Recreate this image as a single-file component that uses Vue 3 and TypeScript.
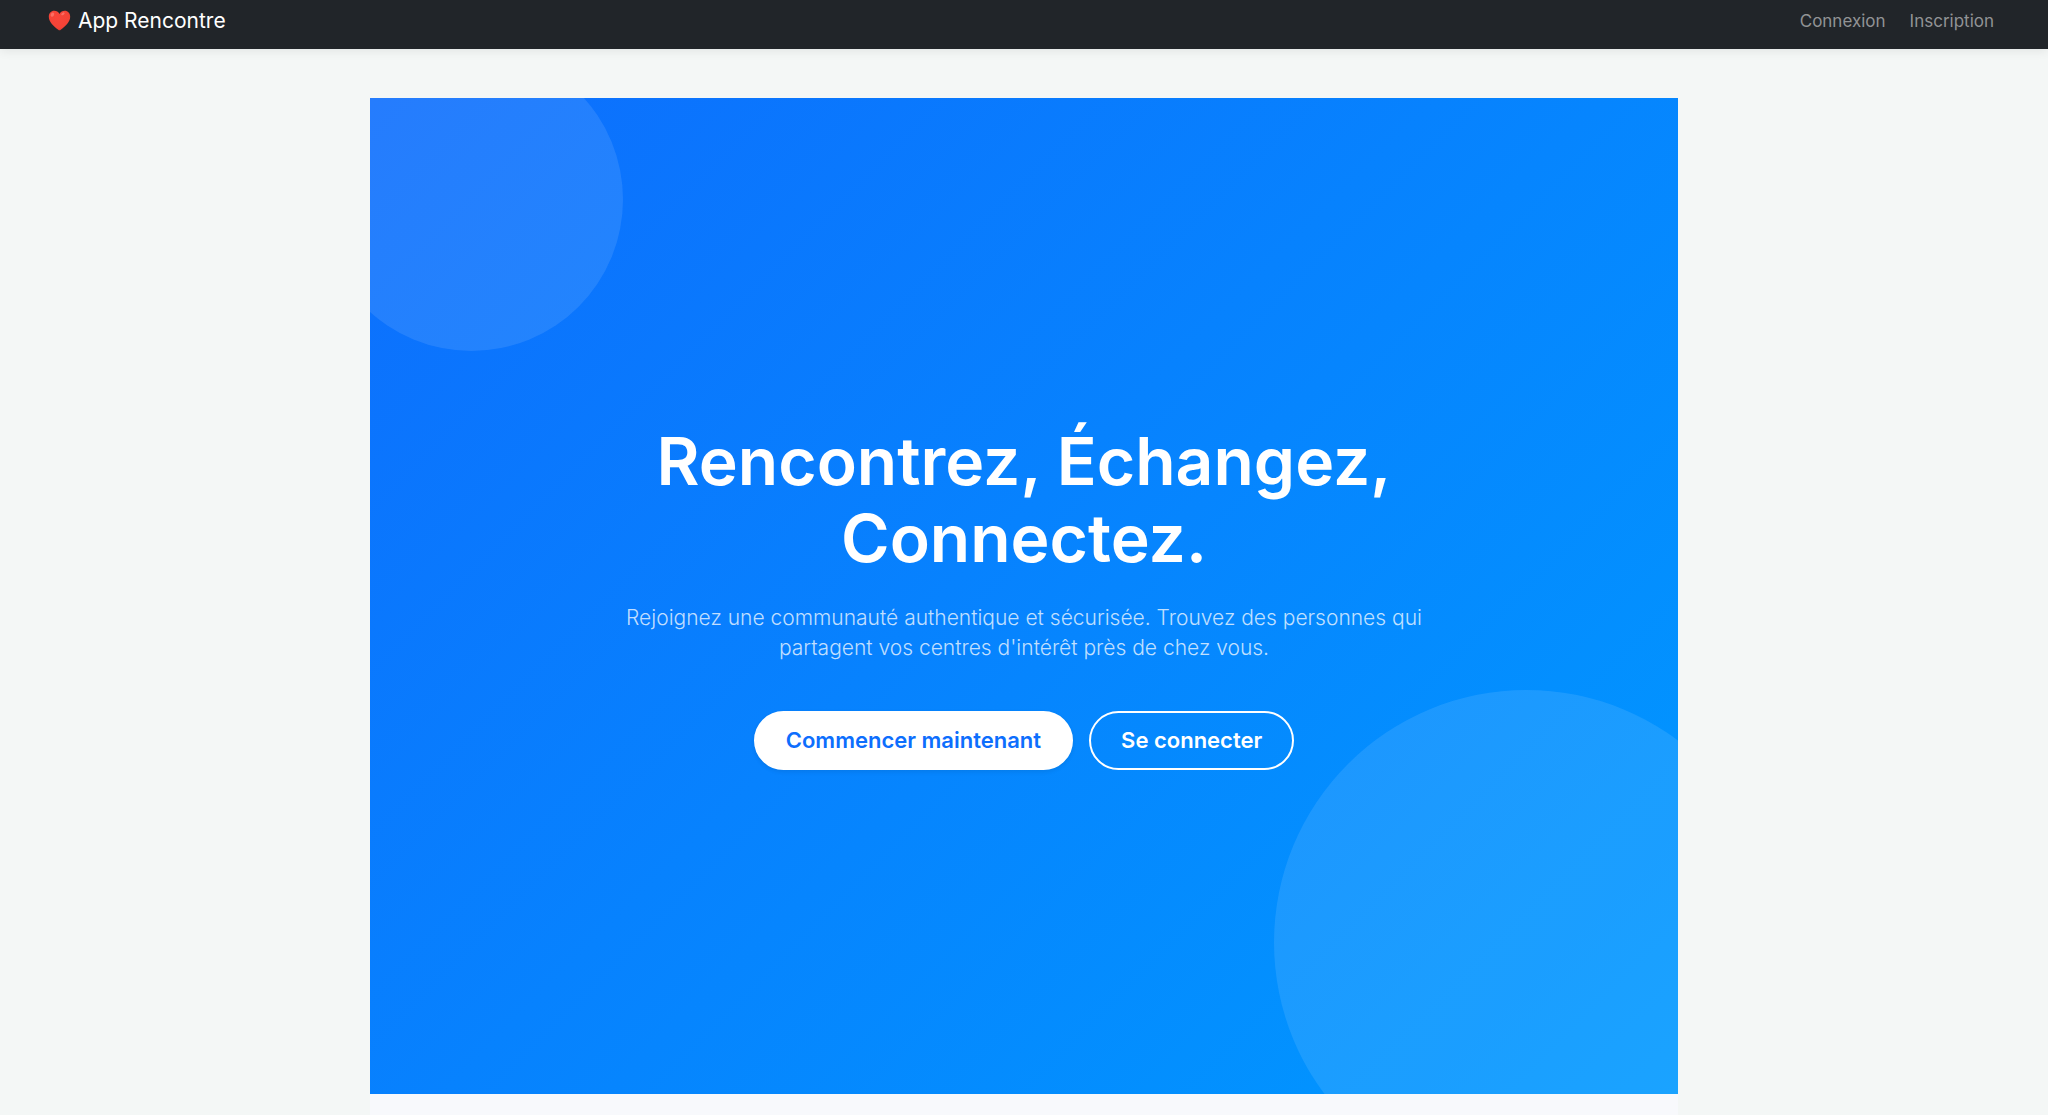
<script setup lang="ts">
interface NavLink {
  label: string
  href: string
}

const links: NavLink[] = [
  { label: 'Connexion', href: '#connexion' },
  { label: 'Inscription', href: '#inscription' },
]
</script>

<template>
  <div class="page">
    <header class="navbar">
      <a class="brand" href="#accueil">
        <svg class="heart" viewBox="0 0 24 22" aria-hidden="true">
          <defs>
            <radialGradient id="heart-fill" cx="0.42" cy="0.35" r="0.75">
              <stop offset="0" stop-color="#f8453a" />
              <stop offset="0.7" stop-color="#f44336" />
              <stop offset="1" stop-color="#d9352c" />
            </radialGradient>
          </defs>
          <path
            d="M12 4.2C10.9 1.9 8.8.8 6.6.8 3.2.8.8 3.4.8 7c0 5.800 5.200 9.900 9.900 13.800.8.7 1.800.7 2.600 0C18 16.900 23.200 12.800 23.200 7c0-3.600-2.400-6.200-5.800-6.200C15.200.8 13.100 1.900 12 4.200Z"
            fill="url(#heart-fill)"
          />
          <ellipse cx="4.600" cy="4.800" rx="1.700" ry="2.300" transform="rotate(32 4.600 4.800)" fill="#ff8a80" opacity="0.6" />
          <ellipse cx="15.600" cy="4" rx="2" ry="1.200" transform="rotate(-35 15.600 4)" fill="#ff8a80" opacity="0.6" />
        </svg>
        <span>App Rencontre</span>
      </a>
      <nav class="links" aria-label="Navigation principale">
        <a v-for="link in links" :key="link.href" :href="link.href">{{ link.label }}</a>
      </nav>
    </header>

    <main class="content">
      <section class="hero">
        <div class="hero-text">
          <h1>Rencontrez, Échangez,<br />Connectez.</h1>
          <p>
            Rejoignez une communauté authentique et sécurisée. Trouvez des personnes qui<br />
            partagent vos centres d'intérêt près de chez vous.
          </p>
          <div class="actions">
            <button type="button" class="btn solid">Commencer maintenant</button>
            <button type="button" class="btn outline">Se connecter</button>
          </div>
        </div>
      </section>
      <section class="below"></section>
    </main>
  </div>
</template>

<style>
body {
  margin: 0;
  background: #f4f7f6;
}
</style>

<style scoped>
.page {
  display: flex;
  flex-direction: column;
  min-height: 100vh;
  font-family: Inter, "Open Sans", sans-serif;
}

.navbar {
  display: flex;
  align-items: center;
  justify-content: space-between;
  box-sizing: border-box;
  height: 49px;
  padding: 0 54px 8px 48px;
  background: #212529;
  box-shadow: 0 2px 10px rgba(0, 0, 0, 0.08);
}

.brand {
  display: flex;
  align-items: center;
  gap: 7px;
  color: #fff;
  font-size: 21px;
  line-height: 30px;
  text-decoration: none;
}

.heart {
  width: 23px;
  height: 21px;
}

.links {
  display: flex;
  gap: 24px;
}

.links a {
  color: #919395;
  font-size: 17px;
  line-height: 24px;
  text-decoration: none;
}

.content {
  display: flex;
  flex: 1;
  flex-direction: column;
  width: 100%;
  max-width: 1308px;
  margin: 49px auto 0;
}

.hero {
  position: relative;
  display: flex;
  align-items: center;
  justify-content: center;
  min-height: calc(100vh - 119px);
  overflow: hidden;
  background: linear-gradient(135deg, #0d6efd 0%, #0099ff 100%);
}

.hero::before,
.hero::after {
  content: "";
  position: absolute;
  border-radius: 50%;
  background: rgba(255, 255, 255, 0.1);
}

.hero::before {
  top: -50px;
  left: -50px;
  width: 303px;
  height: 303px;
}

.hero::after {
  right: -101px;
  bottom: -101px;
  width: 505px;
  height: 505px;
}

.hero-text {
  position: relative;
  z-index: 1;
  text-align: center;
}

h1 {
  margin: 0 0 26px;
  color: #fff;
  font-size: 66px;
  font-weight: 600;
  line-height: 77px;
}

p {
  margin: 0 0 48px;
  color: rgba(255, 255, 255, 0.75);
  font-size: 21px;
  font-weight: 300;
  line-height: 30px;
}

.actions {
  display: flex;
  justify-content: center;
  gap: 16px;
}

.btn {
  box-sizing: border-box;
  height: 59px;
  padding: 0 30px;
  border: 2px solid #fff;
  border-radius: 30px;
  font-family: inherit;
  font-size: 22px;
  font-weight: 600;
  line-height: 30px;
  cursor: pointer;
}

.solid {
  background: #fff;
  color: #0d6efd;
  box-shadow: 0 2px 4px rgba(0, 0, 0, 0.08);
}

.outline {
  background: transparent;
  color: #fff;
}

.below {
  flex: 1;
  background: #f8f9fc;
}
</style>
